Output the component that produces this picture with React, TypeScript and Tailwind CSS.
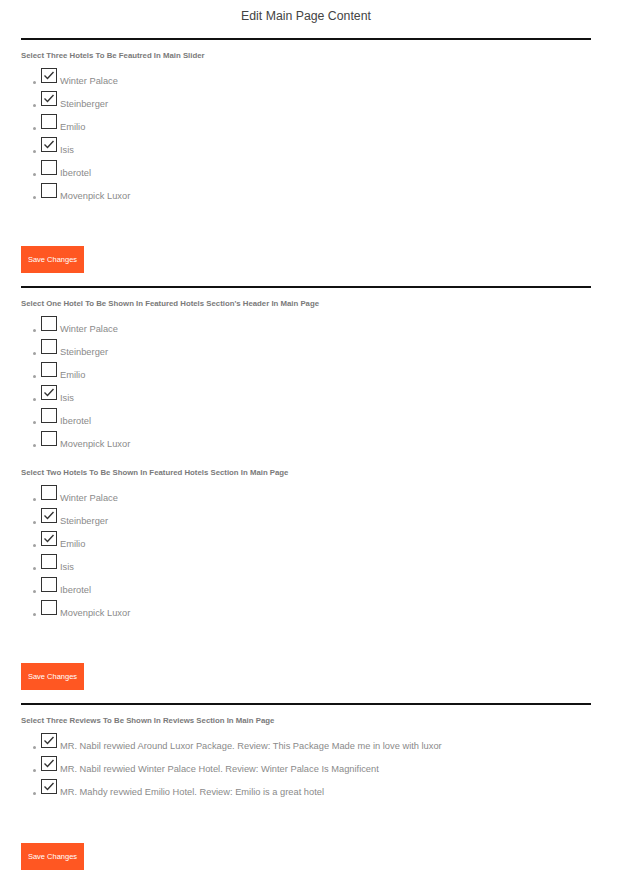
import React, { useState } from "react";

type Item = { label: string; checked: boolean };

const sliderHotels: Item[] = [
  { label: "Winter Palace", checked: true },
  { label: "Steinberger", checked: true },
  { label: "Emilio", checked: false },
  { label: "Isis", checked: true },
  { label: "Iberotel", checked: false },
  { label: "Movenpick Luxor", checked: false },
];

const headerHotel: Item[] = [
  { label: "Winter Palace", checked: false },
  { label: "Steinberger", checked: false },
  { label: "Emilio", checked: false },
  { label: "Isis", checked: true },
  { label: "Iberotel", checked: false },
  { label: "Movenpick Luxor", checked: false },
];

const featuredHotels: Item[] = [
  { label: "Winter Palace", checked: false },
  { label: "Steinberger", checked: true },
  { label: "Emilio", checked: true },
  { label: "Isis", checked: false },
  { label: "Iberotel", checked: false },
  { label: "Movenpick Luxor", checked: false },
];

const reviews: Item[] = [
  {
    label:
      "MR. Nabil revwied Around Luxor Package. Review: This Package Made me in love with luxor",
    checked: true,
  },
  {
    label: "MR. Nabil revwied Winter Palace Hotel. Review: Winter Palace Is Magnificent",
    checked: true,
  },
  {
    label: "MR. Mahdy revwied Emilio Hotel. Review: Emilio is a great hotel",
    checked: true,
  },
];

function CheckList({ items }: { items: Item[] }) {
  const [state, setState] = useState(items.map((i) => i.checked));

  return (
    <ul className="mt-[2px]">
      {items.map((item, idx) => (
        <li
          key={idx}
          className="flex items-start h-[23px] pt-[4px] cursor-pointer"
          onClick={() => setState(state.map((s, i) => (i === idx ? !s : s)))}
        >
          <span className="ml-[12px] mt-[14px] w-[3px] h-[3px] rounded-full bg-[#a0a0a0]" />
          <span className="ml-[5px] mt-[1px] w-[16px] h-[15px] border border-[#333] bg-white flex items-center justify-center">
            {state[idx] && (
              <svg width="14" height="13" viewBox="0 0 14 13">
                <polyline
                  points="2.5,6.5 5.5,9.5 11.5,3"
                  fill="none"
                  stroke="#333"
                  strokeWidth="1.4"
                />
              </svg>
            )}
          </span>
          <span className="ml-[3px] pt-[8px] leading-[12px] text-[9.3px] text-[#8a8a8a] whitespace-nowrap">
            {item.label}
          </span>
        </li>
      ))}
    </ul>
  );
}

function Label({ children, className }: { children: React.ReactNode; className: string }) {
  return (
    <p className={`${className} text-[7.8px] leading-[10px] font-bold text-[#7a7a7a]`}>
      {children}
    </p>
  );
}

function SaveButton({ className }: { className: string }) {
  return (
    <button
      className={`${className} block w-[63px] h-[27px] bg-[#ff5722] text-white text-[7.5px] leading-[27px] text-center`}
    >
      Save Changes
    </button>
  );
}

export default function App() {
  return (
    <div
      className="w-[632px] min-h-[882px] bg-white pl-[21px] pr-[41px]"
      style={{ fontFamily: '"Liberation Sans", Arial, sans-serif' }}
    >
      <h1 className="pt-[8px] text-center text-[12.3px] leading-[16px] text-[#444]">
        Edit Main Page Content
      </h1>
      <div className="mt-[14px] h-[2px] bg-[#111]" />

      <Label className="mt-[11px]">Select Three Hotels To Be Feautred In Main Slider</Label>
      <CheckList items={sliderHotels} />
      <SaveButton className="mt-[45px]" />

      <div className="mt-[13px] h-[2px] bg-[#111]" />
      <Label className="mt-[11px]">
        Select One Hotel To Be Shown In Featured Hotels Section's Header In Main Page
      </Label>
      <CheckList items={headerHotel} />

      <Label className="mt-[19px]">
        Select Two Hotels To Be Shown In Featured Hotels Section In Main Page
      </Label>
      <CheckList items={featuredHotels} />
      <SaveButton className="mt-[45px]" />

      <div className="mt-[13px] h-[2px] bg-[#111]" />
      <Label className="mt-[11px]">Select Three Reviews To Be Shown In Reviews Section In Main Page</Label>
      <CheckList items={reviews} />
      <SaveButton className="mt-[46px]" />
    </div>
  );
}
